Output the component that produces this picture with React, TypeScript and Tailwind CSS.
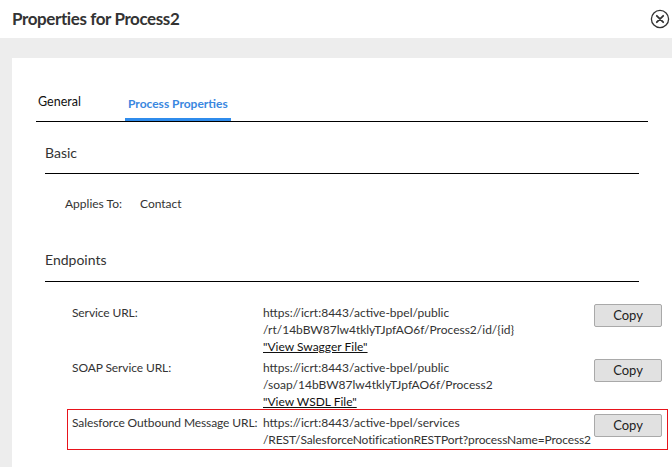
import React from 'react';

type Endpoint = {
  label: string;
  lines: string[];
  link?: string;
  highlight?: boolean;
};

const endpoints: Endpoint[] = [
  {
    label: 'Service URL:',
    lines: ['https://icrt:8443/active-bpel/public', '/rt/14bBW87lw4tklyTJpfAO6f/Process2/id/{id}'],
    link: '"View Swagger File"',
  },
  {
    label: 'SOAP Service URL:',
    lines: ['https://icrt:8443/active-bpel/public', '/soap/14bBW87lw4tklyTJpfAO6f/Process2'],
    link: '"View WSDL File"',
  },
  {
    label: 'Salesforce Outbound Message URL:',
    lines: ['https://icrt:8443/active-bpel/services', '/REST/SalesforceNotificationRESTPort?processName=Process2'],
    highlight: true,
  },
];

function CloseIcon() {
  return (
    <svg width="20" height="20" viewBox="0 0 20 20" fill="none" stroke="#333" strokeWidth="1.3">
      <circle cx="10" cy="10" r="8.6" />
      <path d="M6.8 6.8l6.4 6.4M13.2 6.8l-6.4 6.4" strokeWidth="1.8" strokeLinecap="round" />
    </svg>
  );
}

function EndpointRow({ item }: { item: Endpoint }) {
  // the highlighted row gets a red frame, the others keep the same horizontal inset
  const boxClass = item.highlight
    ? 'flex items-start border border-[#e8131b] pl-[4px] pr-[5px] -mt-[5px] pt-[4px] pb-[1px]'
    : 'flex items-start border-x border-transparent pl-[4px] pr-[5px]';
  return (
    <div className={boxClass}>
      <div className="w-[191px] shrink-0 leading-[17px] text-[12px] tracking-[-0.1px] whitespace-nowrap">
        {item.label}
      </div>
      <div className="w-[331px] shrink-0 leading-[17px] whitespace-nowrap text-[12px]">
        {item.lines.map((l) => (
          <div key={l} className={l.length > 50 ? 'tracking-[-0.12px]' : ''}>
            {l}
          </div>
        ))}
        {item.link && <div className="underline text-[#111]">{item.link}</div>}
      </div>
      <button className="w-[68px] h-[23px] mt-[0.5px] shrink-0 bg-[#e1e1e1] border border-[#a9a9a9] rounded-[2px] text-[13px] text-[#222]">
        Copy
      </button>
    </div>
  );
}

export default function App() {
  return (
    <div
      className="w-[672px] h-[467px] overflow-hidden bg-white flex flex-col text-[#333] text-[13px]"
      style={{ fontFamily: 'Lato, "Liberation Sans", sans-serif' }}
    >
      <div className="h-[38px] shrink-0 flex items-center justify-between pl-3 pr-[2px]">
        <h1 className="text-[17px] font-bold text-[#333] pb-[1px] tracking-[-0.4px]">Properties for Process2</h1>
        <CloseIcon />
      </div>

      <div className="flex-1 bg-[#ededed] pt-[20px] pl-3 flex flex-col">
        <div className="flex-1 bg-white">
          {/* tabs */}
          <div className="mt-[35px] ml-6 mr-6 flex items-end border-b border-black">
            <div className="w-[89px] pl-[2px] pb-[9px] text-[#111] text-[12.5px]">General</div>
            <div className="px-[3px] pb-[5px] border-b-[3px] border-[#2f8cec] text-[#3a87e0] font-bold text-[12px]">
              Process Properties
            </div>
          </div>

          {/* basic */}
          <div className="mx-[33px] mt-[22px] pb-[12px] border-b border-black text-[14px] leading-[17px]">Basic</div>
          <div className="flex mt-[21px] pl-[53px] leading-[17px] text-[12px]">
            <div className="w-[75px]">Applies To:</div>
            <div>Contact</div>
          </div>

          {/* endpoints */}
          <div className="mx-[33px] mt-[39px] pb-[13px] border-b border-black text-[14px] leading-[17px]">Endpoints</div>

          <div className="ml-[55px] mr-[4px] mt-[22px] flex flex-col gap-[4px]">
            {endpoints.map((e) => (
              <EndpointRow key={e.label} item={e} />
            ))}
          </div>
        </div>
      </div>
    </div>
  );
}
